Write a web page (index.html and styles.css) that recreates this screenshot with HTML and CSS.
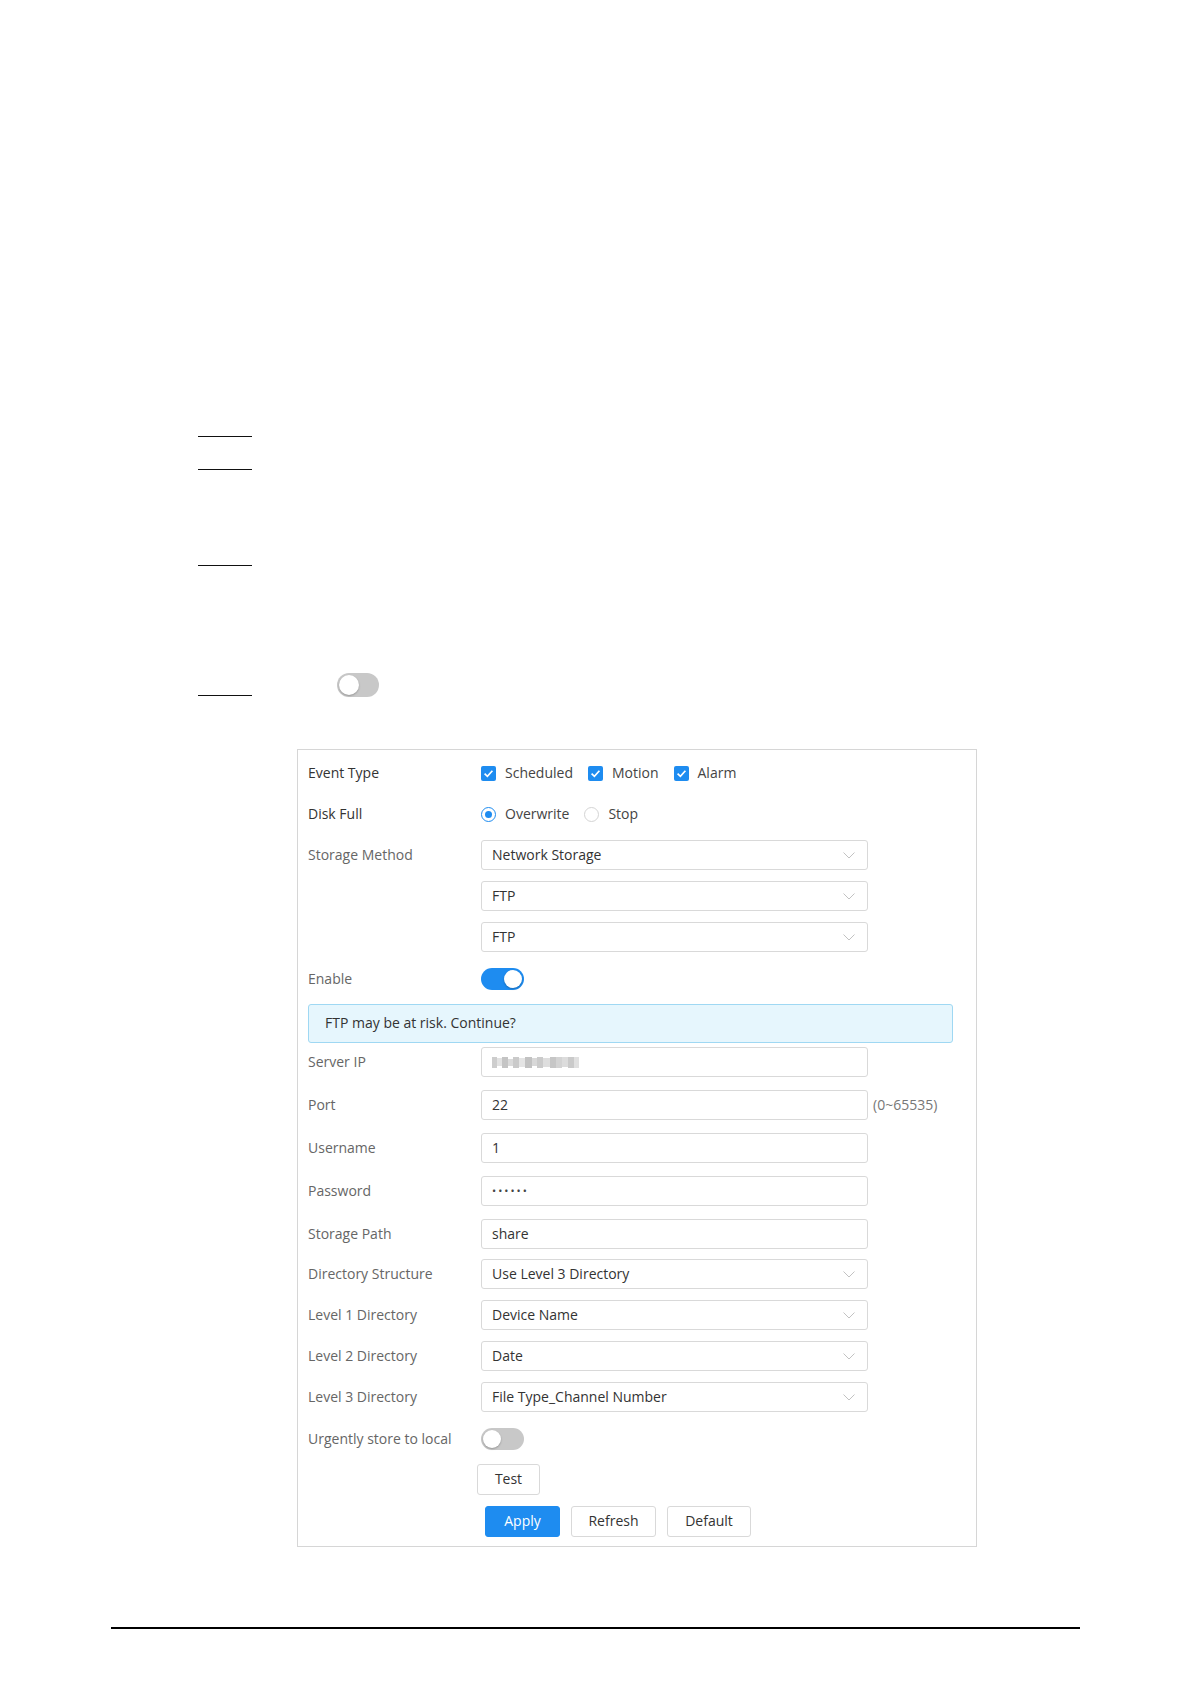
FILE: index.html
```html
<!DOCTYPE html>
<html lang="en">
<head>
    <meta charset="UTF-8">
    <meta name="viewport" content="width=device-width, initial-scale=1.0">
    <title>Record Storage</title>
    <link rel="stylesheet" href="styles.css">
</head>
<body>
    <div class="manual">
        <div class="steps">
            <div class="step-rule"></div>
            <div class="step-rule rule-2"></div>
            <div class="step-rule rule-3"></div>
            <div class="step-row">
                <div class="step-rule"></div>
                <span class="switch switch-off switch-big"><span class="knob"></span></span>
            </div>
        </div>

        <div class="frame">
            <div class="row">
                <div class="label label-dark">Event Type</div>
                <div class="options">
                    <label class="option"><span class="check"><svg width="15" height="15" viewBox="0 0 15 15"><path d="M3.6 7.6 L6.4 10.3 L11.4 4.8" fill="none" stroke="#fff" stroke-width="1.7"/></svg></span>Scheduled</label>
                    <label class="option"><span class="check"><svg width="15" height="15" viewBox="0 0 15 15"><path d="M3.6 7.6 L6.4 10.3 L11.4 4.8" fill="none" stroke="#fff" stroke-width="1.7"/></svg></span>Motion</label>
                    <label class="option"><span class="check"><svg width="15" height="15" viewBox="0 0 15 15"><path d="M3.6 7.6 L6.4 10.3 L11.4 4.8" fill="none" stroke="#fff" stroke-width="1.7"/></svg></span>Alarm</label>
                </div>
            </div>

            <div class="row">
                <div class="label label-dark">Disk Full</div>
                <div class="options">
                    <label class="option"><span class="radio radio-on"></span>Overwrite</label>
                    <label class="option"><span class="radio"></span>Stop</label>
                </div>
            </div>

            <div class="row">
                <div class="label">Storage Method</div>
                <div class="select">Network Storage<svg class="arrow" width="12" height="7" viewBox="0 0 12 7"><polyline points="0.5,0.5 6,6 11.5,0.5" fill="none" stroke="#c2c2c2" stroke-width="1"/></svg></div>
            </div>
            <div class="row">
                <div class="label"></div>
                <div class="select">FTP<svg class="arrow" width="12" height="7" viewBox="0 0 12 7"><polyline points="0.5,0.5 6,6 11.5,0.5" fill="none" stroke="#c2c2c2" stroke-width="1"/></svg></div>
            </div>
            <div class="row">
                <div class="label"></div>
                <div class="select">FTP<svg class="arrow" width="12" height="7" viewBox="0 0 12 7"><polyline points="0.5,0.5 6,6 11.5,0.5" fill="none" stroke="#c2c2c2" stroke-width="1"/></svg></div>
            </div>

            <div class="row row-enable">
                <div class="label">Enable</div>
                <span class="switch switch-on"><span class="knob"></span></span>
            </div>

            <div class="alert">FTP may be at risk. Continue?</div>

            <div class="row row-text">
                <div class="label">Server IP</div>
                <div class="input">
                    <span class="masked">
                        <i style="width:5px;height:11px;background:#cdcdcd"></i><i style="width:5px;height:8px;background:#e2e2e2"></i><i style="width:6px;height:11px;background:#c4c4c4"></i><i style="width:5px;height:7px;background:#dadada"></i><i style="width:6px;height:11px;background:#cacaca"></i><i style="width:6px;height:9px;background:#e4e4e4"></i><i style="width:7px;height:11px;background:#c2c2c2"></i><i style="width:5px;height:8px;background:#d8d8d8"></i><i style="width:6px;height:11px;background:#cbcbcb"></i><i style="width:7px;height:9px;background:#dedede"></i><i style="width:6px;height:11px;background:#c6c6c6"></i><i style="width:6px;height:11px;background:#d3d3d3"></i><i style="width:6px;height:10px;background:#dcdcdc"></i><i style="width:6px;height:11px;background:#cacaca"></i><i style="width:5px;height:11px;background:#e0e0e0"></i>
                    </span>
                </div>
            </div>
            <div class="row row-text">
                <div class="label">Port</div>
                <div class="input">22</div>
                <span class="hint">(0~65535)</span>
            </div>
            <div class="row row-text">
                <div class="label">Username</div>
                <div class="input">1</div>
            </div>
            <div class="row row-text">
                <div class="label">Password</div>
                <div class="input"><span class="dots">••••••</span></div>
            </div>
            <div class="row row-path">
                <div class="label">Storage Path</div>
                <div class="input">share</div>
            </div>

            <div class="row">
                <div class="label">Directory Structure</div>
                <div class="select">Use Level 3 Directory<svg class="arrow" width="12" height="7" viewBox="0 0 12 7"><polyline points="0.5,0.5 6,6 11.5,0.5" fill="none" stroke="#c2c2c2" stroke-width="1"/></svg></div>
            </div>
            <div class="row">
                <div class="label">Level 1 Directory</div>
                <div class="select">Device Name<svg class="arrow" width="12" height="7" viewBox="0 0 12 7"><polyline points="0.5,0.5 6,6 11.5,0.5" fill="none" stroke="#c2c2c2" stroke-width="1"/></svg></div>
            </div>
            <div class="row">
                <div class="label">Level 2 Directory</div>
                <div class="select">Date<svg class="arrow" width="12" height="7" viewBox="0 0 12 7"><polyline points="0.5,0.5 6,6 11.5,0.5" fill="none" stroke="#c2c2c2" stroke-width="1"/></svg></div>
            </div>
            <div class="row">
                <div class="label">Level 3 Directory</div>
                <div class="select">File Type_Channel Number<svg class="arrow" width="12" height="7" viewBox="0 0 12 7"><polyline points="0.5,0.5 6,6 11.5,0.5" fill="none" stroke="#c2c2c2" stroke-width="1"/></svg></div>
            </div>

            <div class="row row-local">
                <div class="label">Urgently store to local</div>
                <span class="switch switch-off"><span class="knob"></span></span>
            </div>

            <div class="row row-test">
                <div class="label"></div>
                <button class="btn btn-test">Test</button>
            </div>
            <div class="row row-actions">
                <div class="label"></div>
                <button class="btn btn-primary">Apply</button>
                <button class="btn btn-refresh">Refresh</button>
                <button class="btn btn-default">Default</button>
            </div>
        </div>

        <div class="page-rule"></div>
    </div>
</body>
</html>
```

FILE: styles.css
```css
body {
    margin: 0;
    background: #fff;
    font-family: 'Open Sans', 'Noto Sans', sans-serif;
    font-size: 14px;
    color: #333;
}
.manual {
    padding-top: 436px;
}
.steps {
    margin-left: 198px;
}
.step-rule {
    width: 54px;
    border-top: 1px solid #111;
}
.rule-2 {
    margin-top: 32px;
}
.rule-3 {
    margin-top: 95px;
}
.step-row {
    display: flex;
    align-items: flex-end;
    gap: 85px;
    margin-top: 107px;
}
.step-row .step-rule {
    margin-bottom: 1px;
}

/* switches */
.switch {
    position: relative;
    display: inline-block;
    width: 43px;
    height: 22px;
    border-radius: 11px;
    flex: none;
}
.switch-big {
    width: 42px;
    height: 24px;
    border-radius: 12px;
}
.switch-off {
    background: #c8c8c8;
}
.switch-on {
    background: #1e8cf0;
}
.knob {
    position: absolute;
    top: 2px;
    left: 2px;
    width: 18px;
    height: 18px;
    border-radius: 50%;
    background: #fff;
    box-shadow: 0 1px 2px rgba(0,0,0,0.25);
}
.switch-big .knob {
    width: 20px;
    height: 20px;
}
.switch-on .knob {
    left: auto;
    right: 2px;
}

/* settings frame */
.frame {
    width: 680px;
    box-sizing: border-box;
    margin: 52px 0 0 297px;
    border: 1px solid #d6d6d6;
    padding: 8px 10px 9px 10px;
}
.row {
    display: flex;
    align-items: center;
    height: 30px;
    margin-bottom: 11px;
}
.label {
    width: 173px;
    flex: none;
    padding-bottom: 2px;
    color: #666;
    white-space: nowrap;
}
.label-dark {
    color: #333;
}
.options {
    display: flex;
    align-items: center;
}
.option {
    display: flex;
    align-items: center;
    margin-right: 15px;
    padding-bottom: 2px;
    color: #444;
}
.check {
    width: 15px;
    height: 15px;
    border-radius: 2px;
    background: #1e8cf0;
    margin: 2px 9px 0 0;
}
.check svg {
    display: block;
}
.radio {
    position: relative;
    width: 15px;
    height: 15px;
    box-sizing: border-box;
    border: 1px solid #d4d4d4;
    border-radius: 50%;
    margin: 2px 9px 0 0;
}
.radio-on {
    border-color: #1e8cf0;
}
.radio-on::after {
    content: '';
    position: absolute;
    top: 3px;
    left: 3px;
    width: 7px;
    height: 7px;
    border-radius: 50%;
    background: #1e8cf0;
}
.select,
.input {
    position: relative;
    display: flex;
    align-items: center;
    width: 387px;
    height: 30px;
    box-sizing: border-box;
    border: 1px solid #d9d9d9;
    border-radius: 3px;
    padding: 0 0 2px 10px;
    color: #333;
    white-space: nowrap;
}
.arrow {
    position: absolute;
    right: 12px;
    top: 11px;
}
.row-enable {
    margin-top: 12px;
    margin-bottom: 10px;
}
.alert {
    display: flex;
    align-items: center;
    width: 645px;
    height: 39px;
    box-sizing: border-box;
    margin-bottom: 4px;
    padding: 0 0 2px 16px;
    background: #e6f6fd;
    border: 1px solid #9fd8f3;
    border-radius: 3px;
    color: #333;
}
.row-text {
    margin-bottom: 13px;
}
.row-path {
    margin-bottom: 10px;
}
.masked {
    display: flex;
    align-items: center;
    margin-top: 2px;
    filter: blur(0.7px);
}
.masked i {
    display: block;
}
.dots {
    font-size: 11px;
    letter-spacing: 2px;
    color: #444;
}
.hint {
    margin-left: 5px;
    padding-bottom: 2px;
    color: #777;
    font-size: 14px;
}
.row-local {
    margin-top: 12px;
    margin-bottom: 10px;
}
.row-test {
    height: 31px;
}
.row-actions {
    height: 31px;
    margin-bottom: 0;
}
.btn {
    height: 31px;
    box-sizing: border-box;
    border: 1px solid #d9d9d9;
    border-radius: 3px;
    background: #fff;
    color: #333;
    font-family: inherit;
    font-size: 14px;
    padding: 0 0 2px 0;
}
.btn-test {
    width: 63px;
    margin-left: -4px;
}
.btn-primary {
    width: 75px;
    margin-left: 4px;
    border-color: #1e8cf0;
    background: #1e8cf0;
    color: #fff;
}
.btn-refresh {
    width: 85px;
    margin-left: 11px;
}
.btn-default {
    width: 84px;
    margin-left: 11px;
}
.page-rule {
    width: 969px;
    margin: 80px 0 0 111px;
    border-top: 2px solid #000;
}
```
